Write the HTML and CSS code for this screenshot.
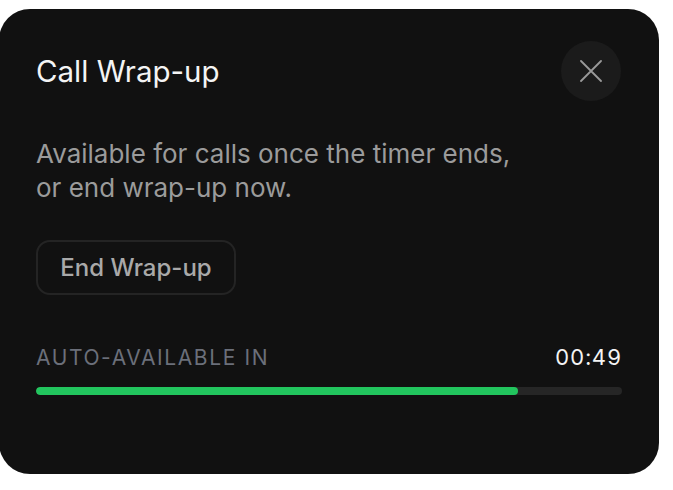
FILE: index.html
```html
<!DOCTYPE html>
<html lang="en">
<head>
<meta charset="utf-8">
<title>Call Wrap-up</title>
<link rel="stylesheet" href="styles.css">
</head>
<body>
<div class="card">
  <div class="header">
    <h1 class="title">Call Wrap-up</h1>
    <button class="close" aria-label="Close">
      <svg width="22" height="22" viewBox="0 0 22 22" fill="none" stroke="#9a9a9a" stroke-width="1.8" stroke-linecap="round"><path d="M1 1L21 21M21 1L1 21"/></svg>
    </button>
  </div>
  <p class="desc">Available for calls once the timer ends,<br>or end wrap-up now.</p>
  <button class="end-btn">End Wrap-up</button>
  <div class="timer">
    <div class="timer-row">
      <span class="timer-label">AUTO-AVAILABLE IN</span>
      <span class="timer-value">00:49</span>
    </div>
    <div class="track"><div class="fill" style="width: 82.3%"></div></div>
  </div>
</div>
</body>
</html>
```
FILE: styles.css
```css
html, body {
  margin: 0;
  padding: 0;
  background: #ffffff;
}
body {
  font-family: Inter, "Noto Sans", sans-serif;
}
.card {
  box-sizing: border-box;
  width: 660px;
  height: 465px;
  margin: 9px 0 0 -1px;
  padding: 32px 37px 0 37px;
  background: #111111;
  border-radius: 31px;
  display: flex;
  flex-direction: column;
  align-items: flex-start;
}
.header {
  width: 100%;
  display: flex;
  align-items: center;
  justify-content: space-between;
  height: 60px;
}
.title {
  margin: 0;
  font-size: 29.5px;
  font-weight: 400;
  color: #f4f4f4;
  line-height: 36px;
}
.close {
  width: 60px;
  height: 60px;
  margin-right: 1px;
  border: none;
  border-radius: 50%;
  background: #1b1b1b;
  display: flex;
  align-items: center;
  justify-content: center;
  padding: 0;
}
.desc {
  margin: 36px 0 0 0;
  font-size: 26px;
  line-height: 34px;
  color: #9b9b9b;
}
.end-btn {
  margin-top: 35px;
  box-sizing: border-box;
  height: 55px;
  width: 200px;
  border: 2px solid #242424;
  border-radius: 14px;
  background: #111111;
  color: #a9a9a9;
  font-family: Inter, "Noto Sans", sans-serif;
  font-size: 24px;
  font-weight: 500;
  padding: 0;
}
.timer {
  width: 100%;
  margin-top: 50px;
}
.timer-row {
  display: flex;
  justify-content: space-between;
  align-items: baseline;
  line-height: 24px;
}
.timer-label {
  font-size: 21px;
  letter-spacing: 1.6px;
  color: #6b6f7a;
}
.timer-value {
  font-size: 22px;
  letter-spacing: 0.8px;
  color: #f4f4f4;
  font-variant-numeric: tabular-nums;
}
.track {
  margin-top: 17px;
  height: 8px;
  border-radius: 4px;
  background: #262626;
  overflow: hidden;
}
.fill {
  height: 100%;
  border-radius: 4px;
  background: #22c55e;
}
```
